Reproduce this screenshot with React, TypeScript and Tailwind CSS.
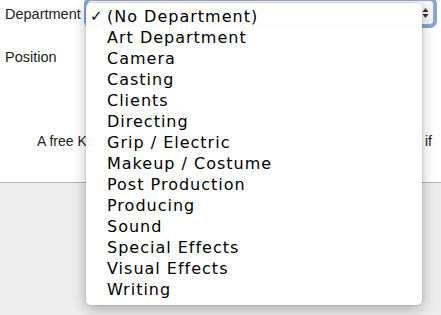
import React from 'react';

const departments = [
  '(No Department)',
  'Art Department',
  'Camera',
  'Casting',
  'Clients',
  'Directing',
  'Grip / Electric',
  'Makeup / Costume',
  'Post Production',
  'Producing',
  'Sound',
  'Special Effects',
  'Visual Effects',
  'Writing',
];

const Arrows: React.FC<{ className?: string }> = ({ className }) => (
  <svg width="7" height="12" viewBox="0 0 7 12" className={className}>
    <path d="M0.5 5 L3.5 1 L6.5 5 Z" fill="currentColor" />
    <path d="M0.5 7 L3.5 11 L6.5 7 Z" fill="currentColor" />
  </svg>
);

const App: React.FC = () => {
  return (
    <div className="relative w-[441px] h-[315px] overflow-hidden bg-[#ececec] font-['Liberation_Sans',Arial,sans-serif] text-[14px] text-[#222]">
      {/* Page form behind the open menu */}
      <div className="h-[183px] bg-white border-b border-[#b5b5b5]">
        <div className="flex items-center h-[28px]">
          <label className="w-[87px] pl-[5px] leading-none text-[14.5px]">Department</label>
          <div className="flex items-center justify-end w-[347px] h-[25px] self-start rounded-[4px] border border-[#9aa9c6] bg-[#f7f7f7] shadow-[0_0_0_3px_#7fa6de] pr-[4px]">
            <Arrows className="text-[#333]" />
          </div>
        </div>
        <div className="flex items-center h-[23px] mt-[18px]">
          <label className="w-[87px] pl-[5px] leading-none text-[14.5px]">Position</label>
          <div className="flex items-center gap-[8px] h-[23px] ml-[60px] pl-[8px] pr-[6px] rounded-[4px] border border-[#eee] bg-[#fafafa] text-[#e8e8e8] text-[15px] font-['DejaVu_Sans',sans-serif]">
            <span>(Department Head)</span>
            <Arrows className="text-[#e2e2e2]" />
          </div>
        </div>
        <div className="flex mt-[19px]">
          <div className="ml-[188px] w-[94px] h-[30px] rounded-[4px] bg-[#f4f4f4] text-[#e9e9e9] flex items-center justify-center font-bold text-[15px]">
            Add User
          </div>
        </div>
        <div className="mt-[14px] pl-[37px] leading-[18px] text-[14px] whitespace-nowrap">
          <div>
            A free Ke<span className="text-[#eeeeee]">ycode account will be automatically setup for this </span>
            <span className="absolute left-[425px]">if</span>
          </div>
          <div className="pl-[222px] text-[#eeeeee]">ry.</div>
        </div>
      </div>

      {/* Open dropdown menu */}
      <div className="absolute left-[86px] top-[3px] w-[336px] h-[302px] rounded-[5px] bg-white/[0.97] shadow-[0_4px_14px_rgba(0,0,0,0.28),0_0_0_1px_rgba(0,0,0,0.06)] pt-[3px] font-['DejaVu_Sans',sans-serif] text-[16px] tracking-[1px] text-black">
        {departments.map((d, i) => (
          <div key={d} className="relative h-[21px] leading-[21px] pl-[21px] whitespace-nowrap">
            {i === 0 && <span className="absolute left-[4px] top-0 text-[15px] font-bold">✓</span>}
            {d}
          </div>
        ))}
      </div>
    </div>
  );
};

export default App;
